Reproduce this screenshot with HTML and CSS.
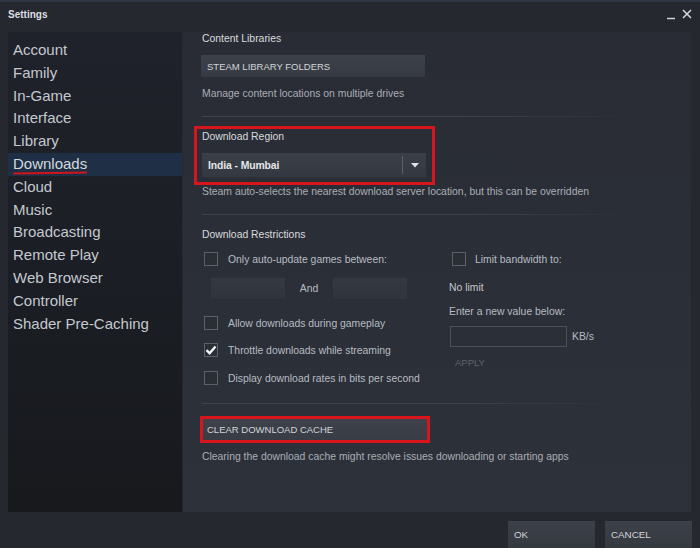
FILE: index.html
```html
<!DOCTYPE html>
<html>
<head>
<meta charset="utf-8">
<link rel="stylesheet" href="styles.css">
</head>
<body>
<div class="window">
  <div class="titlebar">
    <span class="title">Settings</span>
    <div class="winctl">
      <svg class="min" width="9" height="9" viewBox="0 0 9 9"><path d="M0 7.5H8" stroke="#d7dade" stroke-width="1.4"/></svg>
      <svg class="close" width="10" height="10" viewBox="0 0 10 10"><path d="M1 1L9 9M9 1L1 9" stroke="#d7dade" stroke-width="1.5"/></svg>
    </div>
  </div>
  <div class="main">
    <nav class="sidebar">
      <div class="nav-item">Account</div>
      <div class="nav-item">Family</div>
      <div class="nav-item">In-Game</div>
      <div class="nav-item">Interface</div>
      <div class="nav-item">Library</div>
      <div class="nav-item active"><span class="underlined">Downloads</span></div>
      <div class="nav-item">Cloud</div>
      <div class="nav-item">Music</div>
      <div class="nav-item">Broadcasting</div>
      <div class="nav-item">Remote Play</div>
      <div class="nav-item">Web Browser</div>
      <div class="nav-item">Controller</div>
      <div class="nav-item">Shader Pre-Caching</div>
    </nav>
    <section class="content">
      <div class="heading">Content Libraries</div>
      <div class="btn wide lib-btn">STEAM LIBRARY FOLDERS</div>
      <div class="desc manage">Manage content locations on multiple drives</div>
      <div class="sep sep1"></div>
      <div class="highlight region">
        <div class="heading region-h">Download Region</div>
        <div class="dropdown">
          <span class="dd-value">India - Mumbai</span>
          <span class="dd-divider"></span>
          <svg class="dd-arrow" width="8" height="5" viewBox="0 0 8 5"><path d="M0 0H8L4 4.5Z" fill="#dfe2e6"/></svg>
        </div>
      </div>
      <div class="desc auto">Steam auto-selects the nearest download server location, but this can be overridden</div>
      <div class="sep sep2"></div>
      <div class="heading restr-h">Download Restrictions</div>
      <div class="restr">
        <div class="col-left">
          <div class="check-row"><span class="box"></span><span class="label">Only auto-update games between:</span></div>
          <div class="time-row">
            <span class="time-input"></span>
            <span class="and">And</span>
            <span class="time-input"></span>
          </div>
          <div class="check-row r2"><span class="box"></span><span class="label">Allow downloads during gameplay</span></div>
          <div class="check-row r3"><span class="box checked"><svg width="12" height="10" viewBox="0 0 12 10"><path d="M1.5 5.2L4.6 8.2L10.5 1.5" fill="none" stroke="#f2f3f5" stroke-width="2.4"/></svg></span><span class="label">Throttle downloads while streaming</span></div>
          <div class="check-row r4"><span class="box"></span><span class="label">Display download rates in bits per second</span></div>
        </div>
        <div class="col-right">
          <div class="check-row bw"><span class="box"></span><span class="label">Limit bandwidth to:</span></div>
          <div class="desc nolimit">No limit</div>
          <div class="desc enter">Enter a new value below:</div>
          <div class="kb-row"><span class="kb-input"></span><span class="kb">KB/s</span></div>
          <div class="apply">APPLY</div>
        </div>
      </div>
      <div class="sep sep3"></div>
      <div class="highlight clear">
        <div class="btn clear-btn">CLEAR DOWNLOAD CACHE</div>
      </div>
      <div class="desc clearing">Clearing the download cache might resolve issues downloading or starting apps</div>
    </section>
  </div>
  <div class="footer">
    <div class="btn foot-btn">OK</div>
    <div class="btn foot-btn">CANCEL</div>
  </div>
</div>
</body>
</html>
```

FILE: styles.css
```css
* { box-sizing: border-box; }
html, body { margin: 0; padding: 0; }
body {
  width: 700px;
  height: 548px;
  overflow: hidden;
  background: #25282e;
  font-family: "Liberation Sans", Arial, sans-serif;
  color: #c6cad0;
}
.window {
  width: 700px;
  height: 548px;
  background: #25282e;
  border-top: 2px solid #2f3544;
}
.titlebar {
  height: 30px;
  display: flex;
  align-items: center;
  justify-content: space-between;
  padding: 0 8px 6px 8px;
}
.title {
  font-size: 10px;
  font-weight: bold;
  color: #dcdfe3;
}
.winctl {
  display: flex;
  align-items: center;
  gap: 6px;
}
.winctl .min { margin-top: 2px; }
.main {
  display: flex;
  height: 480px;
  padding-left: 8px;
  gap: 1px;
}
.sidebar {
  width: 174px;
  height: 480px;
  background: linear-gradient(180deg, #1f222a 0%, #1b1e24 50%, #17191d 100%);
  padding-top: 7px;
}
.nav-item {
  height: 22.8px;
  line-height: 22.8px;
  padding-left: 5px;
  font-size: 15px;
  color: #c4c9cf;
}
.nav-item.active {
  background: #1f3046;
  color: #d4d9df;
}
.underlined {
  display: inline-block;
  position: relative;
}
.underlined::after {
  content: "";
  position: absolute;
  left: 0;
  right: 0;
  bottom: 2px;
  height: 2px;
  background: #d3131c;
  border-radius: 1px;
  transform: rotate(-0.6deg);
}
.content {
  width: 508px;
  height: 480px;
  background: linear-gradient(180deg, #292c34 0%, #2b2f37 60%, #2d3139 100%);
  padding: 1px 0 0 19px;
}
.heading {
  font-size: 10.4px;
  line-height: 12px;
  color: #d8dbdf;
}
.desc {
  font-size: 10.4px;
  line-height: 12px;
  color: #a9aeb6;
}
.btn {
  background: linear-gradient(180deg, #3d4149 0%, #363a42 100%);
  color: #d2d5da;
  font-size: 9.5px;
  display: flex;
  align-items: center;
  padding-left: 6px;
}
.wide { width: 224px; height: 22px; margin-left: -1px; }
.lib-btn { margin-top: 10px; }
.manage { margin-top: 11px; }
.sep {
  height: 1px;
  width: 430px;
  background: linear-gradient(90deg, #3e434b 0%, #3e434b 60%, rgba(62,67,75,0.4) 85%, rgba(62,67,75,0) 100%);
}
.sep1 { margin-top: 16px; }
.sep2 { margin-top: 16px; }
.sep3 { margin-top: 15px; width: 420px; }
.highlight {
  border: 3px solid #d8141c;
}
.region {
  margin-top: 9px;
  margin-left: -8px;
  width: 241px;
  height: 59px;
  padding: 2px 7px 0 5px;
}
.dropdown {
  margin-top: 10px;
  width: 224px;
  height: 24px;
  background: linear-gradient(180deg, #3b3f48 0%, #343841 100%);
  display: flex;
  align-items: center;
  padding-left: 6px;
  position: relative;
}
.dd-value {
  flex: 1;
  font-size: 10.4px;
  font-weight: bold;
  color: #e4e6e9;
  letter-spacing: -0.1px;
}
.dd-divider {
  width: 1px;
  height: 18px;
  background: #5c616a;
  margin-right: 8px;
}
.dd-arrow { margin-right: 7px; margin-top: 1px; }
.auto { margin-top: 1px; }
.restr-h { margin-top: 14px; }
.restr {
  display: flex;
}
.col-left { width: 247px; }
.col-right { flex: 1; }
.check-row {
  height: 20px;
  display: flex;
  align-items: center;
  margin-top: 8px;
}
.box {
  width: 14px;
  height: 14px;
  border: 1px solid #5b6069;
  background: #2a2e35;
  margin-left: 2px;
  margin-right: 10px;
  display: flex;
  align-items: center;
  justify-content: center;
}
.label {
  font-size: 10.4px;
  color: #b7bcc3;
}
.time-row {
  margin-top: 9px;
  height: 21px;
  display: flex;
  align-items: center;
  padding-left: 9px;
}
.time-input {
  width: 74px;
  height: 21px;
  background: linear-gradient(180deg, #343841 0%, #30343c 100%);
}
.and {
  width: 48px;
  text-align: center;
  font-size: 10.4px;
  color: #b7bcc3;
}
.r2 { margin-top: 14px; }
.r3 { margin-top: 7px; }
.r4 { margin-top: 8px; }
.bw .box { margin-left: 3px; margin-right: 9px; }
.nolimit { margin-top: 13px; color: #c2c6cc; }
.enter { margin-top: 12px; color: #b7bcc3; }
.kb-row {
  margin-top: 8px;
  display: flex;
  align-items: center;
}
.kb-input {
  width: 117px;
  height: 21px;
  margin-left: 1px;
  border: 1px solid #4b5059;
  background: #2b2f37;
}
.kb {
  margin-left: 5px;
  font-size: 10.4px;
  color: #b7bcc3;
}
.apply {
  margin-top: 10px;
  margin-left: 6px;
  font-size: 9.5px;
  line-height: 12px;
  color: #5f646c;
}
.clear {
  margin-top: 12px;
  margin-left: -2px;
  width: 230px;
  height: 27px;
}
.clear-btn {
  height: 21px;
  padding-left: 4px;
  background: linear-gradient(180deg, #3e424a 0%, #383c44 100%);
}
.clearing { margin-top: 8px; }
.footer {
  display: flex;
  justify-content: flex-end;
  gap: 10px;
  padding: 9px 8px 0 0;
}
.foot-btn {
  width: 87px;
  height: 27px;
  font-size: 9.8px;
  color: #d2d5da;
  background: linear-gradient(180deg, #3c4048 0%, #353940 100%);
}
```
